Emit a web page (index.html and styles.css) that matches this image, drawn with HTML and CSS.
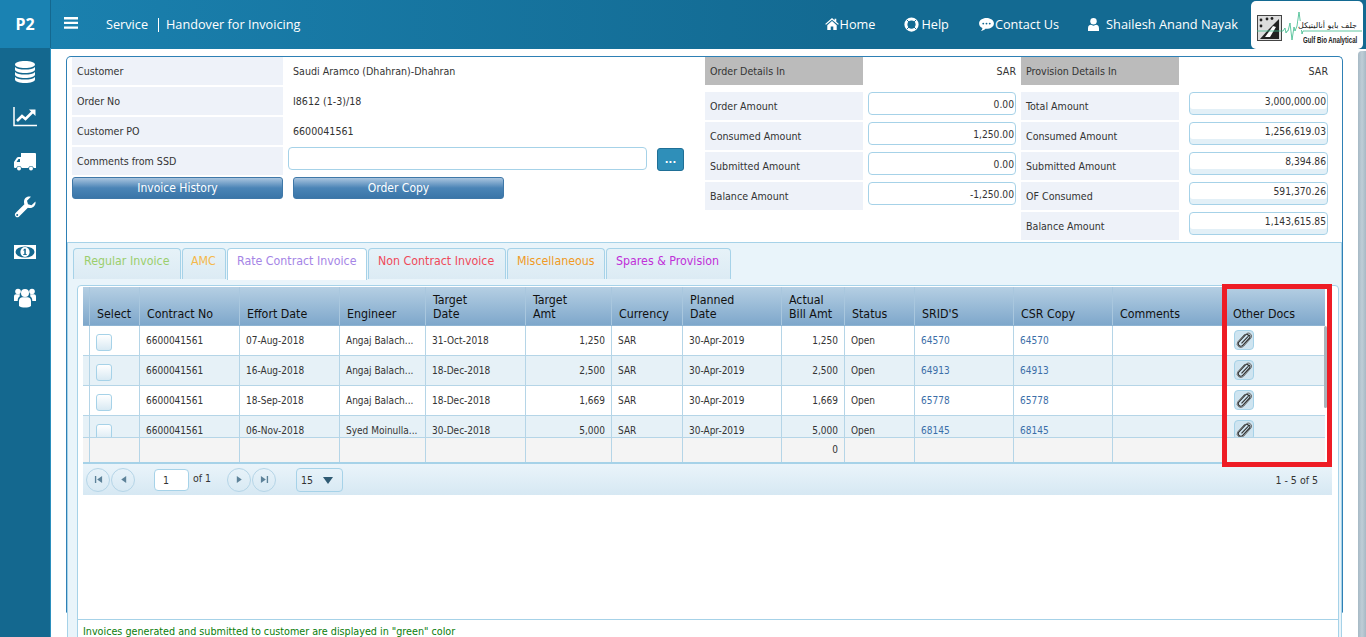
FILE: index.html
```html
<!DOCTYPE html>
<html lang="en">
<head>
<meta charset="utf-8">
<title>Handover for Invoicing</title>
<link rel="stylesheet" href="styles.css">
</head>
<body>
<div class="app">
  <aside class="sidebar">
    <div class="brand">P2</div>
    <nav class="side-nav">
      <svg class="side-icon" viewBox="0 0 24 24"><path fill="#fff" d="M12 1c-5.500 0-10 1.500-10 3.500S6.500 8 12 8s10-1.500 10-3.500S17.500 1 12 1zM2 7v2.500C2 11.500 6.500 13 12 13s10-1.500 10-3.500V7c-1.500 1.800-5.500 2.600-10 2.600S3.500 8.800 2 7zm0 5v2.500C2 16.500 6.500 18 12 18s10-1.500 10-3.500V12c-1.500 1.800-5.500 2.600-10 2.600S3.500 13.800 2 12zm0 5v2.500c0 2 4.500 3.500 10 3.500s10-1.500 10-3.500V17c-1.500 1.800-5.500 2.600-10 2.600S3.500 18.800 2 17z"/></svg>
      <svg class="side-icon" viewBox="0 0 24 24"><path fill="none" stroke="#fff" stroke-width="1.500" d="M1 2v18.500h23"/><path fill="none" stroke="#fff" stroke-width="2.600" d="M4 16l5-5 3.500 3L20 6.500"/><path fill="#fff" d="M16 4.500h6.500V11z"/></svg>
      <svg class="side-icon" viewBox="0 0 24 24"><path fill="#fff" d="M8 3h14a1 1 0 0 1 1 1v14h-2.200a3 3 0 0 0-5.600 0H8.800a3 3 0 0 0-5.600 0H2a1 1 0 0 1-1-1v-5l3-4.500A2 2 0 0 1 5.500 7H8zM3.500 12H7V9H5.500z"/><circle cx="6" cy="18.500" r="2" fill="#fff"/><circle cx="18" cy="18.500" r="2" fill="#fff"/></svg>
      <svg class="side-icon" viewBox="0 0 24 24"><path fill="#fff" d="M22.500 6.500l-4 3.800-3.500-1-1-3.600 3.900-3.900C14.800 1 11 2.800 11 7c0 .8.100 1.500.4 2.200L2.300 18.200a2.600 2.600 0 0 0 3.600 3.600l9-9.100c4 1.500 8.200-1.500 7.600-6.200z"/><circle cx="4.200" cy="20" r="1" fill="#14688f"/></svg>
      <svg class="side-icon" viewBox="0 0 24 24"><rect x="1" y="5" width="22" height="14" fill="#fff"/><ellipse cx="12" cy="12" rx="9.500" ry="5.500" fill="#14688f"/><ellipse cx="12" cy="12" rx="4.600" ry="5" fill="#fff"/><path fill="#14688f" d="M11.300 8.800h1.500v5.400h1.100V15h-3.800v-.8h1.200v-4l-1 .5V10z"/></svg>
      <svg class="side-icon" viewBox="0 0 24 24"><circle cx="12" cy="8" r="4" fill="#fff"/><circle cx="5" cy="6.500" r="2.800" fill="#fff"/><circle cx="19" cy="6.500" r="2.800" fill="#fff"/><path fill="#fff" d="M6 21v-5c0-2.500 1.500-3.800 3.500-3.800h5c2 0 3.500 1.300 3.500 3.800v5c-1.500 1-3.500 1.500-6 1.500s-4.500-.5-6-1.500zM1 11.500c0-1.500 1-2.300 2-2.300h4c-.6 1-.1 2-.1 2C5.500 12 4.700 13.500 4.700 16H1zM23 11.500c0-1.500-1-2.300-2-2.300h-4c.6 1 .1 2 .1 2 1.400.8 2.200 2.300 2.200 4.800H23z"/></svg>
    </nav>
  </aside>
  <div class="main">
    <header class="topbar">
      <svg class="burger" viewBox="0 0 14 12"><path fill="#fff" d="M0 0h14v2.400H0zM0 4.700h14v2.400H0zM0 9.400h14v2.400H0z"/></svg>
      <div class="crumb"><span>Service</span><span class="crumb-sep"></span><span>Handover for Invoicing</span></div>
      <nav class="top-nav">
        <a class="top-link home"><svg viewBox="0 0 16 14"><path fill="#fff" d="M8 0L0 7l1 1 7-6 7 6 1-1-3-2.700V1h-2v1.600zM2.500 8.500V14h4v-4h3v4h4V8.500L8 3.500z"/></svg>Home</a>
        <a class="top-link help"><svg viewBox="0 0 16 16"><circle cx="8" cy="8" r="6" fill="none" stroke="#fff" stroke-width="3.200"/><path stroke="#14688f" stroke-width="1" d="M3 3l3 3M13 3l-3 3M3 13l3-3M13 13l-3-3"/></svg>Help</a>
        <a class="top-link contact"><svg viewBox="0 0 16 14"><path fill="#fff" d="M8 0c4.400 0 8 2.500 8 5.800s-3.600 5.800-8 5.800h-1.200C5.500 13 3.500 14 2 14c1-1 1.500-2 1.600-3.300C1.400 9.700 0 7.900 0 5.800 0 2.500 3.600 0 8 0z"/><g fill="#14688f"><circle cx="4.500" cy="6" r="1"/><circle cx="8" cy="6" r="1"/><circle cx="11.500" cy="6" r="1"/></g></svg>Contact Us</a>
        <a class="top-link user"><svg viewBox="0 0 12 14"><circle cx="6" cy="3.500" r="3.500" fill="#fff"/><path fill="#fff" d="M0 14v-3c0-2.400 1.800-3.600 3.200-3.600 1.800 1.200 3.800 1.200 5.600 0 1.400 0 3.200 1.200 3.200 3.600v3z"/></svg>Shailesh Anand Nayak</a>
      </nav>
      <div class="logo">
        <svg class="logo-mark" viewBox="0 0 112 48"><rect x="6.500" y="14.500" width="24" height="25" fill="#ddd" stroke="#444" stroke-width="1"/><path fill="#222" d="M9 38l8-9 11-11v20z"/><path fill="#fff" d="M14 36l8-11 3 1-6 10z"/><g fill="#222"><circle cx="10" cy="19" r="1.400"/><circle cx="16" cy="18" r="1.400"/><circle cx="21" cy="17.500" r="1.400"/><circle cx="10" cy="25" r="1.400"/></g><path fill="none" stroke="#3bb98a" stroke-width=".8" d="M6 30h26l2-3 1 5 1-2h1l2-8 2 17 2-13 1 4 2-5 2-14 3 22 1-3h59"/></svg>
        <div class="logo-text"><span class="logo-ar" lang="ar" dir="rtl">جلف بايو أناليتيكل</span><span class="logo-en">Gulf Bio Analytical</span></div>
      </div>
    </header>
    <div class="workspace">
      <div class="content">
        <section class="card">
          <div class="summary">
            <div class="customer">
              <div class="info-label">Customer</div><div class="info-value">Saudi Aramco (Dhahran)-Dhahran</div>
              <div class="info-label">Order No</div><div class="info-value">I8612 (1-3)/18</div>
              <div class="info-label">Customer PO</div><div class="info-value">6600041561</div>
              <div class="info-label">Comments from SSD</div>
              <div class="comment-cell"><div class="text-input comment-input"></div><button class="dots">...</button></div>
              <button class="action">Invoice History</button>
              <button class="action second">Order Copy</button>
            </div>
            <div class="amounts order">
              <div class="amount-head">Order Details In</div><div class="cur">SAR</div>
              <div class="amount-label">Order Amount</div><div class="text-input amount-input">0.00</div>
              <div class="amount-label">Consumed Amount</div><div class="text-input amount-input">1,250.00</div>
              <div class="amount-label">Submitted Amount</div><div class="text-input amount-input">0.00</div>
              <div class="amount-label">Balance Amount</div><div class="text-input amount-input">-1,250.00</div>
            </div>
            <div class="amounts provision">
              <div class="amount-head">Provision Details In</div><div class="cur">SAR</div>
              <div class="amount-label">Total Amount</div><div class="text-input amount-input ro">3,000,000.00</div>
              <div class="amount-label">Consumed Amount</div><div class="text-input amount-input ro">1,256,619.03</div>
              <div class="amount-label">Submitted Amount</div><div class="text-input amount-input ro">8,394.86</div>
              <div class="amount-label">OF Consumed</div><div class="text-input amount-input ro">591,370.26</div>
              <div class="amount-label">Balance Amount</div><div class="text-input amount-input ro">1,143,615.85</div>
            </div>
          </div>
          <div class="panel">
            <div class="tabs">
              <div class="tab t-regular">Regular Invoice</div>
              <div class="tab t-amc">AMC</div>
              <div class="tab t-rate active">Rate Contract Invoice</div>
              <div class="tab t-non">Non Contract Invoice</div>
              <div class="tab t-misc">Miscellaneous</div>
              <div class="tab t-spares">Spares &amp; Provision</div>
            </div>
            <div class="tab-body">
              <div class="grid-head row">
                <div></div><div>Select</div><div>Contract No</div><div>Effort Date</div><div>Engineer</div><div>Target<br>Date</div><div>Target<br>Amt</div><div>Currency</div><div>Planned<br>Date</div><div>Actual<br>Bill Amt</div><div>Status</div><div>SRID'S</div><div>CSR Copy</div><div>Comments</div><div>Other Docs</div>
              </div>
              <div class="grid-body">
                <div class="row data"><div></div><div><span class="check"></span></div><div>6600041561</div><div>07-Aug-2018</div><div>Angaj Balach...</div><div>31-Oct-2018</div><div class="num">1,250</div><div>SAR</div><div>30-Apr-2019</div><div class="num">1,250</div><div>Open</div><div class="link">64570</div><div class="link">64570</div><div></div><div><span class="clip"><svg viewBox="0 0 16 16"><use href="#clip"/></svg></span></div></div>
                <div class="row data alt"><div></div><div><span class="check"></span></div><div>6600041561</div><div>16-Aug-2018</div><div>Angaj Balach...</div><div>18-Dec-2018</div><div class="num">2,500</div><div>SAR</div><div>30-Apr-2019</div><div class="num">2,500</div><div>Open</div><div class="link">64913</div><div class="link">64913</div><div></div><div><span class="clip"><svg viewBox="0 0 16 16"><use href="#clip"/></svg></span></div></div>
                <div class="row data"><div></div><div><span class="check"></span></div><div>6600041561</div><div>18-Sep-2018</div><div>Angaj Balach...</div><div>18-Dec-2018</div><div class="num">1,669</div><div>SAR</div><div>30-Apr-2019</div><div class="num">1,669</div><div>Open</div><div class="link">65778</div><div class="link">65778</div><div></div><div><span class="clip"><svg viewBox="0 0 16 16"><use href="#clip"/></svg></span></div></div>
                <div class="row data alt"><div></div><div><span class="check"></span></div><div>6600041561</div><div>06-Nov-2018</div><div>Syed Moinulla...</div><div>30-Dec-2018</div><div class="num">5,000</div><div>SAR</div><div>30-Apr-2019</div><div class="num">5,000</div><div>Open</div><div class="link">68145</div><div class="link">68145</div><div></div><div><span class="clip"><svg viewBox="0 0 16 16"><use href="#clip"/></svg></span></div></div>
                <div class="grid-scroll"></div>
              </div>
              <div class="grid-foot row">
                <div></div><div></div><div></div><div></div><div></div><div></div><div></div><div></div><div></div><div class="num">0</div><div></div><div></div><div></div><div></div><div></div>
              </div>
              <div class="pager">
                <span class="page-btn"><svg viewBox="0 0 10 10"><path fill="#5d8299" d="M1 1h1.500v8H1zM9 1v8L3.500 5z"/></svg></span>
                <span class="page-btn"><svg viewBox="0 0 10 10"><path fill="#5d8299" d="M8 1v8L2.500 5z"/></svg></span>
                <span class="page-input">1</span>
                <span class="page-of">of 1</span>
                <span class="page-btn"><svg viewBox="0 0 10 10"><path fill="#5d8299" d="M2 1v8l5.500-4z"/></svg></span>
                <span class="page-btn"><svg viewBox="0 0 10 10"><path fill="#5d8299" d="M1 1v8l5.500-4zM7.500 1H9v8H7.500z"/></svg></span>
                <span class="page-size">15<svg viewBox="0 0 10 8"><path fill="#2f5a73" d="M0 1h10L5 8z"/></svg></span>
                <span class="page-count">1 - 5 of 5</span>
              </div>
              <div class="grid-spacer"></div>
              <div class="note">Invoices generated and submitted to customer are displayed in "green" color</div>
              <div class="highlight"></div>
            </div>
          </div>
        </section>
      </div>
      <div class="page-scroll"></div>
    </div>
  </div>
</div>
<svg class="defs" width="0" height="0"><defs><g id="clip"><path fill="none" stroke="#333" stroke-width="1.200" d="M13 3a2.100 2.100 0 0 1 .6 3L6.800 13.400a2.600 2.600 0 0 1-3.900-3.600L9.700 2.600a1.500 1.500 0 0 1 2.300 2L5.500 11.300"/><path fill="none" stroke="#666" stroke-width="1" d="M11 1.300a3.200 3.200 0 0 1 3.900 4.800L7.800 14a3.400 3.400 0 0 1-5.800-4.400L8.800 2.100"/></g></defs></svg>
</body>
</html>
```
FILE: styles.css
```css
* { box-sizing: border-box; }
html, body { margin: 0; height: 637px; overflow: hidden; background: #fff; }
body { font-family: "DejaVu Sans Condensed", "DejaVu Sans", Verdana, sans-serif; font-stretch: condensed; font-size: 10.6px; color: #333; }
button { font-family: inherit; font-stretch: inherit; cursor: pointer; }
.defs { position: absolute; }

.app { display: flex; height: 637px; }
.sidebar { width: 51px; flex: none; background: #14688f; border-right: 1px solid #2b8fbd; }
.brand { height: 48px; background: #1a82b2; border-right: 1px solid #14688f; margin-right: -1px; color: #fff; font: bold 16px "Noto Sans", sans-serif; display: flex; align-items: center; justify-content: center; }
.side-nav { display: flex; flex-direction: column; align-items: center; padding: 12px 1px 0 0; gap: 21px; }
.side-icon { width: 24px; height: 24px; display: block; }

.main { flex: 1; min-width: 0; display: flex; flex-direction: column; }
.topbar { height: 49px; flex: none; background: linear-gradient(90deg, #1a80ae, #136a92 60%); display: flex; align-items: center; color: #fff; font: 12.7px "Open Sans", sans-serif; padding-right: 3px; }
.burger { width: 14px; height: 12px; margin: -3px 0 0 13px; }
.crumb { margin: -1px 0 0 28px; display: flex; align-items: center; }
.crumb-sep { width: 1px; height: 14px; background: #fff; margin: 1px 7px 0 10px; }
.top-nav { margin-left: auto; display: flex; align-items: center; margin-top: -1px; }
.top-link { display: flex; align-items: center; gap: 1px; }
.top-link svg { display: block; }
.home svg { width: 14px; height: 12px; }
.help { margin-left: 29px; }
.help svg { width: 15px; height: 15px; margin-right: 1px; }
.contact { margin-left: 30px; }
.contact svg { width: 15px; height: 13px; }
.user { margin-left: 29px; gap: 7px; font-size: 12.8px; }
.user svg { width: 11px; height: 13px; }
.logo { width: 112px; height: 48px; margin-left: 13px; background: #fff; border-radius: 5px; position: relative; color: #222; }
.logo-mark { position: absolute; left: 0; top: 0; width: 112px; height: 48px; }
.logo-text { position: absolute; right: 6px; top: 20px; display: flex; flex-direction: column; align-items: flex-end; }
.logo-ar { font: 8px "DejaVu Sans", sans-serif; line-height: 9px; background: #fff; }
.logo-en { font: bold 8.5px "Liberation Sans", sans-serif; line-height: 9px; margin-top: 6px; white-space: nowrap; transform: scaleX(.72); transform-origin: right center; }

.workspace { flex: 1; min-height: 0; display: flex; }
.content { width: 1307px; flex: none; padding: 7px 0 0 15px; }
.page-scroll { width: 8px; height: 590px; margin-top: 2px; background: linear-gradient(90deg, #a6b9c5, #bfcdd6 50%, #a6b9c5); border-radius: 4px 0 0 4px; }

.card { width: 1277px; height: 557px; border: 1px solid #2e80b5; border-bottom-color: transparent; border-radius: 5px 5px 0 0; }
.summary { height: 185px; display: flex; }
.customer { width: 638px; padding: 0 0 0 5px; display: grid; grid-template-columns: 211px 1fr; grid-auto-rows: 28px; column-gap: 5px; row-gap: 2px; align-content: start; }
.info-label { background: #eef2f9; display: flex; align-items: center; padding-left: 5px; }
.info-value { display: flex; align-items: center; padding-left: 5px; }
.comment-cell { display: flex; align-items: flex-start; }
.text-input { background: #fff; border: 1px solid #a6d2e8; border-radius: 4px; }
.comment-input { width: 359px; height: 23px; }
.dots { width: 27px; height: 23px; margin: 1px 0 0 10px; padding: 0; border: 1px solid #1f6f96; border-radius: 3px; background: #2f8fb9; color: #fff; font-size: 11px; font-weight: bold; }
.action { height: 22px; padding: 0; border: 1px solid #3f78a8; border-radius: 3px; background: linear-gradient(#a9c5df, #4a84b6 50%, #3a75a8); color: #fff; font-size: 12px; }
.second { width: 211px; margin-left: 5px; }

.amounts { display: grid; grid-template-rows: 33px; grid-auto-rows: 28px; row-gap: 2px; align-content: start; }
.order { width: 311px; margin-right: 5px; grid-template-columns: 158px 148px; column-gap: 5px; }
.provision { width: 307px; grid-template-columns: 158px 139px; column-gap: 10px; }
.amount-head { height: 28px; background: #bbb; display: flex; align-items: center; padding-left: 5px; }
.cur { text-align: right; line-height: 28px; height: 28px; }
.amount-label { background: #eef2f9; display: flex; align-items: center; padding: 0 0 0 5px; }
.amount-input { height: 23px; line-height: 23px; text-align: right; padding-right: 1px; font-size: 10.2px; }
.ro { line-height: 17px; box-shadow: inset 0 -5px 0 #e3f0f7; }

.panel { height: 400px; background: #e9f4fa; border: 1px solid #a6d2e8; border-bottom: 0; padding: 5px 0 0 5px; }
.tabs { display: flex; height: 31px; gap: 1px; }
.tab { height: 31px; padding: 0 0 6px 9px; border: 1px solid #a6d2e8; border-bottom: 0; border-radius: 4px 4px 0 0; background: linear-gradient(#e6f2f8, #dcebf4); display: flex; align-items: center; font-size: 12.3px; }
.tab.active { background: #fff; height: 32px; position: relative; padding-bottom: 7px; }
.t-regular { width: 108px; color: #9bce6c; padding-left: 10px; }
.t-amc { width: 44px; color: #f5b84a; padding-left: 8px; }
.t-rate { width: 140px; color: #a585e6; }
.t-non { width: 138px; color: #ef4a5a; }
.t-misc { width: 98px; color: #f09a25; }
.t-spares { width: 125px; color: #c02fd8; }

.tab-body { width: 1262px; height: 360px; margin: 6px 0 0 4px; padding: 1px 0 0 5px; background: #fff; border: 1px solid #a6d2e8; border-radius: 4px 4px 0 0; position: relative; }
.row { display: grid; grid-template-columns: 6px 50px 100px 100px 86px 100px 86px 71px 99px 63px 70px 99px 99px 113px 100px; }
.row > div { border-left: 1px solid #b5d5e7; padding: 0 6px; white-space: nowrap; overflow: hidden; }
.row > div:first-child { border-left: 0; padding: 0; }
.grid-head { width: 1242px; height: 39px; background: linear-gradient(#b5cfe3, #7ea7cb); border-bottom: 1px solid #8eb4d2; color: #111; font-size: 12.3px; line-height: 14px; }
.grid-head > div { display: flex; align-items: flex-end; padding: 0 0 4px 7px; border-left-color: #a9c7de; }
.grid-body { height: 111px; overflow: hidden; position: relative; }
.data { height: 30px; line-height: 29px; border-bottom: 1px solid #b5d5e7; width: 1242px; font-size: 10px; }
.alt { background: #e6f1f7; }
.num { text-align: right; padding-right: 6px !important; }
.link { color: #3b6ea8; }
.check { display: block; width: 16px; height: 17px; margin: 8px 0 0; border: 1px solid #a6d2e8; border-radius: 3px; background: linear-gradient(#fff, #d8e9f3); }
.clip { display: block; width: 20px; height: 20px; margin: 4px 0 0 2px; background: #cfe4f0; border: 1px solid #a6d2e8; border-radius: 4px; padding: 1px; }
.clip svg { display: block; width: 16px; height: 16px; }
.grid-scroll { position: absolute; left: 1241px; top: 0; width: 3px; height: 82px; background: #aab4bb; border-radius: 2px; }
.grid-foot { width: 1242px; height: 25px; background: #f4f4f4; border-top: 1px solid #b5d5e7; line-height: 24px; font-size: 10px; }
.pager { width: 1249px; height: 33px; border-top: 2px solid #a6d2e8; background: linear-gradient(#eaf4fa, #d6e8f3); display: flex; align-items: center; padding: 0 14px 0 3px; font-size: 10.5px; }
.page-btn { width: 24px; height: 24px; border: 1px solid #b5d5e7; border-radius: 50%; margin-right: 1px; display: flex; align-items: center; justify-content: center; }
.page-btn svg { width: 9px; height: 9px; }
.page-input { width: 35px; height: 22px; margin-left: 18px; background: #fff; border: 1px solid #a6d2e8; border-radius: 4px; line-height: 20px; padding-left: 8px; }
.page-of { margin: 0 18px 4px 4px; width: 16px; white-space: nowrap; }
.page-size { width: 47px; height: 24px; margin-left: 19px; border: 1px solid #a6d2e8; border-radius: 4px; display: flex; align-items: center; justify-content: space-between; padding: 0 9px 0 4px; }
.page-size svg { width: 10px; height: 8px; }
.page-count { margin-left: auto; }
.grid-spacer { height: 124px; }
.note { margin-left: -5px; border-top: 1px solid #a6d2e8; padding: 5px 0 0 5px; color: #0a7d0a; font-size: 10.7px; white-space: nowrap; }
.highlight { position: absolute; left: 1144px; top: -2px; width: 110px; height: 183px; border: 5px solid #ee1c25; pointer-events: none; }
```
